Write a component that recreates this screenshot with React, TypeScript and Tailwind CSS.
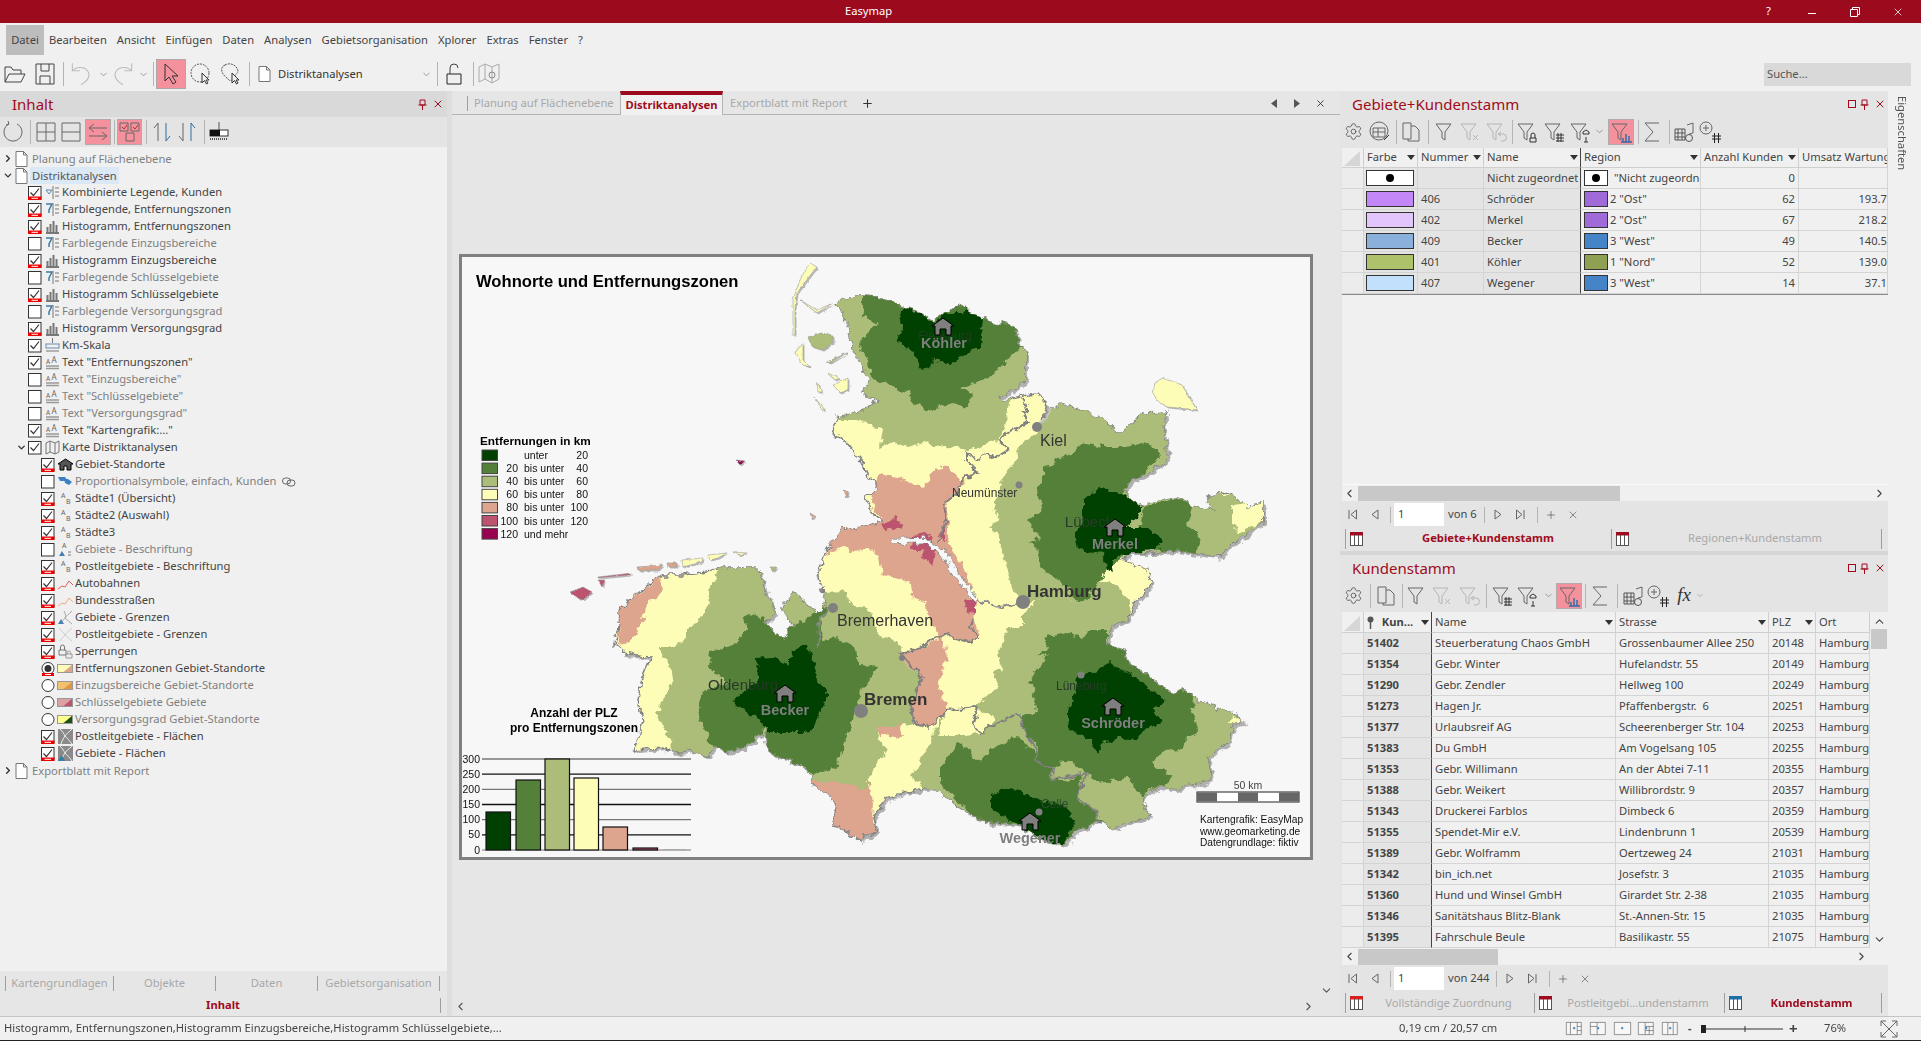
import type { ReactNode } from "react";
import { ChevronDown, ChevronRight, Plus, X, ChevronUp, ChevronLeft, Settings } from "lucide-react";

const ic = { fill: "none", stroke: "#666", strokeWidth: 1 };

// map shapes, in page coordinates of the frame
const LAND =
  "837,302 850,297 862,297 880,298 903,308 922,313 933,320 945,312 965,305 968,312 983,318 995,325 1007,323 1017,332 1018,342 1025,353 1025,377 1017,387 1000,397 1003,402 1023,395 1037,393 1047,403 1043,420 1050,410 1062,404 1080,410 1107,422 1115,432 1125,432 1137,418 1147,413 1167,412 1163,422 1168,457 1143,477 1130,480 1123,490 1140,507 1150,503 1180,497 1192,507 1213,510 1207,498 1227,492 1247,507 1263,503 1263,520 1243,537 1227,547 1220,557 1193,553 1173,550 1157,553 1130,553 1123,560 1147,570 1152,582 1137,600 1127,620 1110,627 1107,645 1123,650 1127,660 1173,695 1182,690 1200,702 1220,710 1233,713 1243,720 1233,725 1230,740 1208,757 1210,780 1170,790 1163,785 1140,797 1150,815 1113,828 1100,820 1077,830 1063,845 1037,837 1020,825 987,822 963,810 933,787 925,788 888,797 873,817 877,830 860,840 833,823 837,803 813,783 813,777 797,763 767,750 765,730 743,748 727,752 715,745 707,757 690,750 672,753 667,748 633,750 637,742 643,723 638,700 643,673 650,657 623,652 615,645 620,623 622,607 630,600 650,583 663,575 683,575 723,568 757,568 775,613 763,623 783,640 793,625 783,608 793,592 817,612 827,605 820,628 817,628 825,600 818,577 827,550 843,530 862,528 880,523 865,498 880,487 867,477 863,463 847,443 832,433 837,417 860,412 880,400 862,393 870,380 863,367 852,347 847,323";

const SALMON = [
  "880,473 897,477 913,485 925,487 933,470 948,467 960,480 973,472 963,485 945,503 950,523 947,543 960,560 977,600 973,617 980,637 963,643 943,633 940,637 928,613 927,603 913,597 910,582 883,575 880,557 868,550 855,552 843,545 827,555 835,530 860,527 880,520 870,500",
  "900,653 917,650 937,640 943,633 947,657 938,683 942,697 947,710 930,727 915,723 910,710 922,677 900,660",
  "813,780 838,770 867,773 873,803 872,820 877,830 860,840 833,823 837,803 813,787",
  "622,607 650,585 660,575 662,592 647,603 643,622 630,643 618,645 620,623",
  "880,727 900,722 903,738 880,735",
];
const LIGHT = [
  "800,290 1030,290 1030,380 1000,400 1010,398 1005,420 1007,427 997,440 970,450 947,447 920,443 908,447 893,442 880,447 883,430 860,420 800,420",
  "1040,430 1045,415 1062,395 1175,395 1175,470 1123,490 1140,505 1180,495 1270,495 1270,545 1200,560 1125,556 1107,570 1080,605 1060,593 1037,600 1023,606 1013,590 1008,570 1000,550 1003,543 990,527 1000,517 993,510 1003,475 1018,458 1017,447",
  "1097,583 1080,605 1060,593 1037,600 1023,613 1023,627 1008,627 997,657 1003,667 992,673 998,687 983,700 973,707 947,710 933,735 917,767 912,778 927,790 1000,850 1260,850 1260,700 1190,680 1127,640 1130,600 1110,580",
  "722,560 780,560 790,590 822,593 847,592 848,603 870,610 880,637 897,640 903,650 900,660 922,677 910,710 915,723 893,727 880,727 878,740 887,750 873,767 867,790 843,783 813,780 760,770 672,760 670,740 657,713 672,680 670,665 658,648 672,648 688,638 688,630 705,613 710,593",
];
const MID = [
  "862,290 1030,290 1030,347 1020,347 1010,357 987,380 960,388 973,393 968,407 950,403 930,410 913,403 910,390 900,392 887,383 873,380 867,360 860,345 862,337 878,325 863,315 862,305",
  "1043,468 1073,452 1083,443 1103,447 1127,447 1143,442 1158,450 1160,458 1137,480 1130,480 1123,490 1130,550 1123,557 1107,570 1093,590 1080,605 1067,587 1043,570 1038,550 1030,543 1040,537 1028,520 1043,507 1035,487 1043,483",
  "1143,507 1180,498 1192,507 1188,523 1200,537 1197,555 1150,550 1140,530",
  "1088,630 1107,630 1107,645 1123,650 1127,660 1173,695 1182,690 1193,697 1192,710 1197,730 1187,738 1180,750 1163,752 1152,763 1172,777 1167,783 1140,795 1130,778 1100,783 1087,773 1080,770 1070,760 1053,767 1037,763 1037,747 1023,727 1020,718 1037,710 1030,680 1040,667 1047,653 1037,657 1047,647 1043,638 1067,633 1083,638",
  "940,767 960,743 970,750 980,762 993,747 1017,737 1037,753 1053,767 1050,780 1062,780 1083,773 1077,800 1097,813 1107,827 1077,830 1063,845 1020,825 980,822 953,797 940,783",
  "743,618 750,613 762,618 775,630 783,640 793,625 805,620 817,608 827,607 820,627 822,640 840,638 855,648 860,665 878,667 873,677 860,690 858,703 847,737 838,757 837,767 813,775 797,763 767,750 765,728 743,750 727,752 713,747 698,717 702,692 730,683 708,667 710,652 733,645 747,630",
];
const DARK = [
  "903,308 900,320 902,328 898,340 913,353 922,370 930,367 933,358 950,365 960,357 980,347 983,318 967,305 962,313 943,313 935,322 920,313",
  "1083,500 1097,488 1110,490 1123,495 1142,505 1138,517 1127,527 1147,527 1163,540 1157,550 1123,555 1110,560 1113,573 1107,570 1103,553 1077,550 1075,537 1083,520",
  "1110,662 1117,667 1128,673 1165,700 1152,710 1162,722 1143,730 1137,740 1120,738 1103,743 1097,755 1090,740 1068,728 1068,710 1075,693 1078,677 1100,668",
  "990,793 1013,788 1030,797 1063,805 1075,820 1067,837 1063,845 1037,837 1020,825 997,813 990,807",
  "732,700 758,682 757,658 775,657 787,665 793,650 807,645 813,660 817,678 828,693 818,720 807,732 767,732 757,717 737,707",
];
const ISLANDS: [string, string][] = [
  ["#fefdb8", "810,263 817,267 812,273 797,293 795,308 795,335 793,335 793,300 800,280 808,265"],
  ["#fefdb8", "800,300 817,310 833,303 817,313"],
  ["#abbd78", "808,338 820,333 833,335 833,343 823,350 813,347"],
  ["#fefdb8", "795,353 803,343 803,360 810,367 803,365"],
  ["#abbd78", "827,362 847,353 830,363"],
  ["#fefdb8", "833,385 848,378 848,390 840,393"],
  ["#fefdb8", "815,398 825,410 822,410"],
  ["#fefdb8", "817,382 822,392 818,392"],
  ["#fefdb8", "827,373 840,378 835,380"],
  ["#dda48e", "843,490 848,492 847,497"],
  ["#dda48e", "810,513 815,516 812,519"],
  ["#bc5470", "570,592 583,587 592,592 583,600 577,598"],
  ["#bc5470", "598,577 632,573 630,575 598,578"],
  ["#bc5470", "598,580 605,580 602,587"],
  ["#dda48e", "637,567 663,565 658,570 638,570"],
  ["#dda48e", "667,563 677,563 677,567 668,567"],
  ["#fefdb8", "682,560 703,558 702,562 683,567"],
  ["#fefdb8", "708,555 727,553 718,558 710,560"],
  ["#fefdb8", "733,552 747,553 740,555"],
  ["#abbd78", "770,567 777,567 773,572"],
  ["#990050", "736,460 745,461 740,465"],
  ["#fefdb8", "1162,378 1182,385 1197,410 1177,408 1167,407 1157,400 1153,393 1155,383"],
];
const ROSE = [
  "880,525 897,517 902,527 885,530",
  "910,550 912,535 930,533 935,552 932,565 925,560 922,550",
  "938,535 945,530 945,540",
  "965,600 975,600 975,613 967,615",
];
const BORDERS = [
  "1023,397 1028,413 1023,412 1028,422 1007,433 1000,440 1008,450 995,458 987,453 977,460 967,453 967,462 977,472 963,480 957,493 943,505 947,523 938,543",
  "1017,713 1037,753 1037,763 1053,767 1052,780 1087,773 1077,798 1097,813 1100,823",
  "973,617 970,627 980,638 963,643 943,633 917,650 900,653 922,677 910,710 915,723 930,727 947,710 977,707 973,723 980,734 993,725 1017,713",
];
const LEGEND: [string, string, string, string][] = [
  ["#004000", "", "unter", "20"],
  ["#548039", "20", "bis unter", "40"],
  ["#abbd78", "40", "bis unter", "60"],
  ["#fefdb8", "60", "bis unter", "80"],
  ["#dda48e", "80", "bis unter", "100"],
  ["#bc5470", "100", "bis unter", "120"],
  ["#990050", "120", "und mehr", ""],
];
const BARS: [number, number, string][] = [
  [486, 812, "#004000"],
  [516, 780, "#548039"],
  [545, 759, "#abbd78"],
  [574, 778, "#fefdb8"],
  [603, 827, "#dda48e"],
  [633, 848, "#bc5470"],
];

function House({ x, y }: { x: number; y: number }) {
  return (
    <path
      d={`M${x - 11} ${y - 1}L${x} ${y - 9}L${x + 11} ${y - 1}H${x + 8}V${y + 8}H${x + 3}V${y + 2}H${x - 3}V${y + 8}H${x - 8}V${y - 1}Z`}
      fill="#7f7f7f"
      stroke="#000"
      strokeWidth="1"
    />
  );
}

function MapDrawing() {
  return (
    <svg width="848" height="600" viewBox="462 257 848 600" className="block font-['Liberation_Sans',sans-serif]">
      <defs>
        <clipPath id="land">
          <polygon points={LAND} />
        </clipPath>
        <filter id="rough" filterUnits="userSpaceOnUse" x="462" y="257" width="848" height="600" colorInterpolationFilters="sRGB">
          <feTurbulence type="fractalNoise" baseFrequency="0.13" numOctaves="3" seed="4" />
          <feDisplacementMap in="SourceGraphic" scale="9" xChannelSelector="R" yChannelSelector="G" />
        </filter>
        <filter id="fine" filterUnits="userSpaceOnUse" x="462" y="257" width="848" height="600" colorInterpolationFilters="sRGB">
          <feTurbulence type="fractalNoise" baseFrequency="0.2" numOctaves="2" seed="9" />
          <feDisplacementMap in="SourceGraphic" scale="3" xChannelSelector="R" yChannelSelector="G" />
        </filter>
      </defs>
      <g filter="url(#rough)">
        <polygon points={LAND} fill="#b0b0b0" transform="translate(3 3)" />
        <polygon points={LAND} fill="#fefdb8" stroke="#808080" strokeWidth="1.5" />
        <g clipPath="url(#land)">
          {SALMON.map((p) => (
            <polygon key={p} points={p} fill="#dda48e" />
          ))}
          {LIGHT.map((p) => (
            <polygon key={p} points={p} fill="#abbd78" />
          ))}
          <polygon points="947,710 977,707 993,717 993,725 980,734 963,735 937,735" fill="#fefdb8" />
          <polygon points="1123,560 1147,570 1152,582 1137,600 1125,590 1110,578" fill="#fefdb8" />
          <polygon points="1232,505 1263,503 1263,520 1240,533 1232,525" fill="#fefdb8" />
          <polygon points="1232,715 1245,720 1235,726 1228,722" fill="#fefdb8" />
          {MID.map((p) => (
            <polygon key={p} points={p} fill="#548039" />
          ))}
          <polygon points="1053,772 1062,760 1070,770 1085,773 1062,782" fill="#abbd78" />
          <polygon points="1080,787 1100,783 1130,778 1140,795 1150,815 1113,828 1107,827 1097,813 1077,800" fill="#abbd78" />
          {DARK.map((p) => (
            <polygon key={p} points={p} fill="#004000" />
          ))}
          {ROSE.map((p) => (
            <polygon key={p} points={p} fill="#bc5470" />
          ))}
        </g>
        {BORDERS.map((p) => (
          <polyline key={p} points={p} fill="none" stroke="#7f7f7f" strokeWidth="2" />
        ))}
        <polyline points="893,541 925,540 945,555 960,580 977,600" fill="none" stroke="#8a8a8a" strokeWidth="6" />
        <polyline points="893,541 925,540 945,555 960,580 977,600" fill="none" stroke="#f7f7f7" strokeWidth="4.5" />
        <polyline points="977,600 1000,607 1020,603" fill="none" stroke="#8a8a8a" strokeWidth="2" />
        <polyline points="827,607 818,627 820,650" fill="none" stroke="#8a8a8a" strokeWidth="1.5" />
        <polyline points="1037,430 1045,420 1050,410" fill="none" stroke="#c8c8c8" strokeWidth="2.5" />
      </g>
      <g filter="url(#fine)">
        {ISLANDS.map(([, p]) => (
          <polygon key={p} points={p} fill="#b8b8b8" transform="translate(1.5 1.5)" />
        ))}
        {ISLANDS.map(([c, p]) => (
          <polygon key={p} points={p} fill={c} stroke="#9a9a9a" strokeWidth="0.6" />
        ))}
      </g>

      {(
        [
          [1037, 427, 5],
          [1019, 485, 3.5],
          [1023, 602, 7],
          [861, 711, 7],
          [833, 608, 5],
          [1081, 675, 3.5],
          [1039, 812, 3.5],
          [902, 658, 3],
        ] as [number, number, number][]
      ).map(([x, y, r]) => (
        <circle key={x} cx={x} cy={y} r={r} fill="#808080" />
      ))}

      <g fill="#333">
        <text x="945" y="340" fontSize="12" textAnchor="middle" fill="#1f3f1f">Flensburg</text>
        <text x="1089" y="527" fontSize="15" textAnchor="middle" fill="#2a3a2a">Lübeck</text>
        <text x="743" y="690" fontSize="15" textAnchor="middle" fill="#283828">Oldenburg</text>
        <text x="1040" y="446" fontSize="16">Kiel</text>
        <text x="952" y="497" fontSize="12">Neumünster</text>
        <text x="837" y="626" fontSize="16">Bremerhaven</text>
        <text x="1056" y="690" fontSize="12" fill="#2a3a2a">Lüneburg</text>
        <text x="1041" y="808" fontSize="12" fill="#2f4a2f">Celle</text>
        <text x="1027" y="597" fontSize="17" fontWeight="700">Hamburg</text>
        <text x="864" y="705" fontSize="17" fontWeight="700">Bremen</text>
      </g>
      <House x={943} y={327} />
      <House x={1115} y={528} />
      <House x={785} y={694} />
      <House x={1113} y={707} />
      <House x={1030} y={822} />
      <g fill="#7f7f7f" fontSize="14.5" fontWeight="700" textAnchor="middle">
        <text x="944" y="348">Köhler</text>
        <text x="1115" y="549">Merkel</text>
        <text x="785" y="715">Becker</text>
        <text x="1113" y="728">Schröder</text>
        <text x="1030" y="843">Wegener</text>
      </g>

      <text x="476" y="287" fontSize="16.6" fontWeight="700" fill="#000">Wohnorte und Entfernungszonen</text>
      <text x="480" y="445" fontSize="11.8" fontWeight="700" fill="#000">Entfernungen in km</text>
      {LEGEND.map(([c, a, b, d], i) => {
        const y = 450 + i * 13.1;
        return (
          <g key={c} fontSize="10.5" fill="#111">
            <rect x="482" y={y} width="15.5" height="10.5" fill={c} stroke="#444" strokeWidth="1" />
            <text x="518" y={y + 9} textAnchor="end">{a}</text>
            <text x="524" y={y + 9}>{b}</text>
            <text x="588" y={y + 9} textAnchor="end">{d}</text>
          </g>
        );
      })}

      <g fontSize="12" fontWeight="700" textAnchor="middle" fill="#000">
        <text x="574" y="717">Anzahl der PLZ</text>
        <text x="574" y="732">pro Entfernungszonen</text>
      </g>
      {[300, 250, 200, 150, 100, 50, 0].map((v, i) => {
        const y = 759 + i * 15.17;
        return (
          <g key={v}>
            <line x1="482" x2="691" y1={y} y2={y} stroke={i % 2 ? "#111" : "#777"} strokeWidth={i === 6 ? 1 : 1.3} />
            <text x="480" y={y + 3.5} fontSize="10.5" textAnchor="end" fill="#111">{v}</text>
          </g>
        );
      })}
      {BARS.map(([x, y, c]) => (
        <rect key={x} x={x} y={y} width="24.5" height={850 - y} fill={c} stroke="#111" strokeWidth="1.2" />
      ))}
      <line x1="663" x2="686" y1="849.5" y2="849.5" stroke="#aaa" />

      <text x="1248" y="789" fontSize="10.5" textAnchor="middle" fill="#444">50 km</text>
      <rect x="1197" y="792" width="102" height="10" fill="#fff" stroke="#222" />
      {[1197, 1238, 1279].map((x) => (
        <rect key={x} x={x} y="792.5" width="20" height="9" fill="#666" />
      ))}
      <g fontSize="10.2" fill="#111">
        <text x="1200" y="823">Kartengrafik: EasyMap</text>
        <text x="1200" y="835">www.geomarketing.de</text>
        <text x="1200" y="846">Datengrundlage: fiktiv</text>
      </g>
    </svg>
  );
}

function Ico({ children, s = 24 }: { children: ReactNode; s?: number }) {
  return (
    <svg width={s} height={s} viewBox="0 0 24 24" className="shrink-0" {...ic}>
      {children}
    </svg>
  );
}

function Funnel({ grey, children }: { grey?: boolean; children?: ReactNode }) {
  return (
    <Ico>
      <path d="M3 4h15l-6 8v8l-3-2v-6z" stroke={grey ? "#b5b5b5" : "#666"} />
      {children}
    </Ico>
  );
}

const FGrid = () => (
  <path d="M14 15h8M14 18h8M14 21h8M16 13v9M19 13v9" stroke="#333" />
);
const FList = () => (
  <>
    <path d="M15 12l3-2 3 2v2h-6z" stroke="#333" />
    <path d="M18 17v5M16 22h4" stroke="#333" />
  </>
);
const FLock = () => <path d="M15 18h6v4h-6zM16 18v-3a2 2 0 0 1 4 0v3" stroke="#333" />;
const FBars = () => (
  <path d="M12 22h11M14 22v-4M17 22v-8M20 22v-6" stroke="#2a6ea8" strokeWidth="1.4" />
);

const Gear = () => <Settings size={19} color="#555" strokeWidth={1.1} />;
const CopyIcon = () => (
  <Ico>
    <path d="M4 3h8v16H4zM12 6h4l4 4v11h-11v-2" />
  </Ico>
);
const Sigma = () => (
  <Ico>
    <path d="M19 3H5l8 9-8 9h14" />
  </Ico>
);
const CalcIcon = () => (
  <Ico>
    <path d="M3 9h10v11H3zM6 9v11M10 9v11M3 13h10M3 17h10" stroke="#555" />
    <path d="M15 5l6-2v10l-4 1" />
    <circle cx="17" cy="18" r="3.500" stroke="#555" />
  </Ico>
);
const AddGrid = () => (
  <Ico>
    <circle cx="8" cy="8" r="6" />
    <path d="M8 5v6M5 8h6" />
    <path d="M14 16h9M14 19h9M16.500 13v10M20.500 13v10" stroke="#222" />
  </Ico>
);
const Hi = ({ children, w }: { children: ReactNode; w: string }) => (
  <div className={`${w} flex h-[26px] items-center justify-center border border-[#b4a8aa] bg-[#f4919d]`}>{children}</div>
);
const Cell = ({ w, children }: { w: string; children?: ReactNode }) => (
  <div className={`${w} flex shrink-0 items-center justify-center`}>{children}</div>
);
const Sep = ({ w, h = "h-[24px]" }: { w: string; h?: string }) => (
  <div className={`${w} flex shrink-0 justify-center`}>
    <div className={`${h} w-px bg-[#b4b4b4]`} />
  </div>
);
const Chev = () => <ChevronDown size={11} color="#777" strokeWidth={1.5} />;

function PanelHead({ title, square, className }: { title: string; square?: boolean; className: string }) {
  return (
    <div className={`flex h-[26px] shrink-0 items-center ${className}`}>
      <span className="flex-1 text-[15px] text-[#a00b20]">{title}</span>
      {square && <div className="mr-[4px] h-[8px] w-[8px] border border-[#a00b20]" />}
      <svg width="9" height="11" viewBox="0 0 9 11" fill="none" stroke="#a00b20" className="mr-[5px]">
        <path d="M2 1h5v5H2zM.5 6h8M4.500 6v5" />
      </svg>
      <X size={12} color="#a00b20" strokeWidth={2} />
    </div>
  );
}

function TabIcon({ color }: { color: string }) {
  return (
    <svg width="13" height="14" viewBox="0 0 13 14">
      <rect x="0.500" y="0.500" width="12" height="13" fill="#fff" stroke="#555" />
      <rect x="0" y="0" width="13" height="3.500" fill={color} />
      <path d="M4.500 3v11M8.500 3v11" stroke="#555" />
    </svg>
  );
}

function BottomTab({ w, icon, label, active, center }: { w: string; icon: string; label: string; active?: boolean; center: string }) {
  return (
    <div className={`${w} flex h-[20px] shrink-0 items-center border-l border-[#9e9e9e] pl-[4px]`}>
      <TabIcon color={icon} />
      <span className={`${center} text-center ${active ? "font-bold text-[#a00b20]" : "text-[#a8a8a8]"}`}>{label}</span>
    </div>
  );
}

function Pager({ label, w }: { label: string; w: string }) {
  return (
    <div className="flex h-[23px] shrink-0 items-center bg-[#e4e4e4] text-[#444]">
      <Cell w="w-[24px]">
        <svg width="11" height="11" viewBox="0 0 11 11" {...ic}><path d="M2 1v9M9.500 1L4 5.500l5.500 4.500z" /></svg>
      </Cell>
      <Cell w="w-[22px]">
        <svg width="8" height="11" viewBox="0 0 8 11" {...ic}><path d="M7 1L1 5.500 7 10z" /></svg>
      </Cell>
      <Sep w="w-[8px]" h="h-[16px]" />
      <div className="flex h-[23px] w-[50px] shrink-0 items-center bg-white pl-[4px]">1</div>
      <span className={`${w} shrink-0 pl-[4px]`}>{label}</span>
      <Sep w="w-[1px]" h="h-[16px]" />
      <Cell w="w-[25px]">
        <svg width="8" height="11" viewBox="0 0 8 11" {...ic}><path d="M1 1l6 4.500L1 10z" /></svg>
      </Cell>
      <Cell w="w-[21px]">
        <svg width="11" height="11" viewBox="0 0 11 11" {...ic}><path d="M9 1v9M1.500 1L7 5.500 1.500 10z" /></svg>
      </Cell>
      <Sep w="w-[13px]" h="h-[16px]" />
      <Cell w="w-[14px]"><Plus size={12} color="#444" strokeWidth={1.2} /></Cell>
      <Cell w="w-[30px]"><X size={12} color="#444" strokeWidth={1.2} /></Cell>
    </div>
  );
}

function Caret() {
  return (
    <svg width="8" height="5" viewBox="0 0 8 5" className="shrink-0">
      <path d="M0 0h8L4 5z" fill="#333" />
    </svg>
  );
}

const HEAD = "flex h-full items-center justify-between border-r border-b border-[#cfcfcf] bg-[#f0f0f0] pl-[3px] pr-[2px]";
const BODY = "flex h-full items-center border-r border-b border-[#d4d4d4] px-[3px]";

function HandleHead() {
  return (
    <div className="flex h-full w-[22px] items-end border-r border-b border-[#cfcfcf] bg-[#f0f0f0]">
      <svg width="20" height="18" viewBox="0 0 20 18"><path d="M18 2v15H2z" fill="#d6d6d6" /></svg>
    </div>
  );
}

const GEBIETE: [string, string, string, string, string, string, string, string][] = [
  ["#fff", "", "Nicht zugeordnet", "#fff", '"Nicht zugeordne', "0", "", "dot"],
  ["#c387f7", "406", "Schröder", "#a06bd8", '2 "Ost"', "62", "193.7", ""],
  ["#e2c5fb", "402", "Merkel", "#a06bd8", '2 "Ost"', "67", "218.2", ""],
  ["#8ab1dc", "409", "Becker", "#4585c7", '3 "West"', "49", "140.5", ""],
  ["#adc26a", "401", "Köhler", "#8ea052", '1 "Nord"', "52", "139.0", ""],
  ["#c2dffb", "407", "Wegener", "#4585c7", '3 "West"', "14", "37.1", ""],
];

function GebieteGrid() {
  return (
    <div className="ml-[2px] flex h-[353px] w-[546px] shrink-0 flex-col overflow-hidden bg-[#f0f0f0]">
      <div className="flex h-[20px] shrink-0">
        <HandleHead />
        <div className={`${HEAD} w-[54px]`}>Farbe<Caret /></div>
        <div className={`${HEAD} w-[66px]`}>Nummer<Caret /></div>
        <div className={`${HEAD} w-[97px] border-r-[#444]`}>Name<Caret /></div>
        <div className={`${HEAD} w-[120px]`}>Region<Caret /></div>
        <div className={`${HEAD} w-[98px]`}>Anzahl Kunden<Caret /></div>
        <div className={`${HEAD} w-[89px] overflow-hidden whitespace-nowrap`}>Umsatz Wartung</div>
      </div>
      {GEBIETE.map(([c, num, name, rc, reg, cnt, sum, dot]) => (
        <div key={name} className="flex h-[21px] shrink-0">
          <div className="h-full w-[22px] border-r border-b border-[#d4d4d4] bg-[#ececec]" />
          <div className={`${BODY} w-[54px] bg-[#e4e4e4] pl-[2px]`}>
            <div className="flex h-[16px] w-[48px] items-center justify-center border border-[#333]" style={{ background: c }}>
              {dot && <div className="h-[8px] w-[8px] rounded-full bg-black" />}
            </div>
          </div>
          <div className={`${BODY} w-[66px] bg-[#e4e4e4]`}>{num}</div>
          <div className={`${BODY} w-[97px] whitespace-nowrap border-r-[#444] bg-[#e4e4e4]`}>{name}</div>
          <div className={`${BODY} w-[120px] overflow-hidden whitespace-nowrap`}>
            <div className="mr-[2px] flex h-[16px] w-[24px] shrink-0 items-center justify-center border border-[#333]" style={{ background: rc }}>
              {dot && <div className="h-[8px] w-[8px] rounded-full bg-black" />}
            </div>
            <span className={dot ? "ml-[4px]" : ""}>{reg}</span>
          </div>
          <div className={`${BODY} w-[98px] justify-end`}>{cnt}</div>
          <div className={`${BODY} w-[89px] justify-end !px-0`}>{sum}</div>
        </div>
      ))}
      <div className="h-px w-full shrink-0 bg-[#8a8a8a]" />
      <div className="flex-1" />
      <div className="h-px w-full shrink-0 bg-[#fafafa]" />
      <div className="flex h-[16px] shrink-0 items-center justify-between">
        <ChevronLeft size={13} color="#444" strokeWidth={2} className="ml-[1px]" />
        <div className="mr-auto ml-[2px] h-[15px] w-[262px] bg-[#c8c8c8]" />
        <ChevronRight size={13} color="#444" strokeWidth={2} className="mr-[2px]" />
      </div>
    </div>
  );
}

const KUNDEN: [string, string, string, string][] = [
  ["51402", "Steuerberatung Chaos GmbH", "Grossenbaumer Allee 250", "20148"],
  ["51354", "Gebr. Winter", "Hufelandstr. 55", "20149"],
  ["51290", "Gebr. Zendler", "Hellweg 100", "20249"],
  ["51273", "Hagen Jr.", "Pfaffenbergstr.  6", "20251"],
  ["51377", "Urlaubsreif AG", "Scheerenberger Str. 104", "20253"],
  ["51383", "Du GmbH", "Am Vogelsang 105", "20255"],
  ["51353", "Gebr. Willimann", "An der Abtei 7-11", "20355"],
  ["51388", "Gebr. Weikert", "Willibrordstr. 9", "20357"],
  ["51343", "Druckerei Farblos", "Dimbeck 6", "20359"],
  ["51355", "Spendet-Mir e.V.", "Lindenbrunn 1", "20539"],
  ["51389", "Gebr. Wolframm", "Oertzeweg 24", "21031"],
  ["51342", "bin_ich.net", "Josefstr. 3", "21035"],
  ["51360", "Hund und Winsel GmbH", "Girardet Str. 2-38", "21035"],
  ["51346", "Sanitätshaus Blitz-Blank", "St.-Annen-Str. 15", "21035"],
  ["51395", "Fahrschule Beule", "Basilikastr. 55", "21075"],
];

function KundenGrid() {
  return (
    <div className="ml-[2px] flex h-[353px] w-[546px] shrink-0 flex-col overflow-hidden bg-[#f0f0f0]">
      <div className="flex h-[336px] shrink-0">
        <div className="w-[528px] shrink-0">
          <div className="flex h-[21px]">
            <HandleHead />
            <div className={`${HEAD} w-[68px] border-r-[#444]`}>
              <svg width="7" height="13" viewBox="0 0 7 13"><circle cx="3.500" cy="3.500" r="3" fill="#555" /><path d="M3.500 5v8" stroke="#555" strokeWidth="1.500" /></svg>
              <span className="font-bold">Kun...</span>
              <Caret />
            </div>
            <div className={`${HEAD} w-[184px]`}>Name<Caret /></div>
            <div className={`${HEAD} w-[153px]`}>Strasse<Caret /></div>
            <div className={`${HEAD} w-[47px]`}>PLZ<Caret /></div>
            <div className={`${HEAD} w-[54px]`}>Ort</div>
          </div>
          {KUNDEN.map(([id, name, str, plz]) => (
            <div key={id} className="flex h-[21px]">
              <div className="h-full w-[22px] border-r border-b border-[#d4d4d4] bg-[#ececec]" />
              <div className={`${BODY} w-[68px] border-r-[#444] bg-[#e4e4e4] font-bold`}>{id}</div>
              <div className={`${BODY} w-[184px] whitespace-nowrap`}>{name}</div>
              <div className={`${BODY} w-[153px] whitespace-pre`}>{str}</div>
              <div className={`${BODY} w-[47px]`}>{plz}</div>
              <div className={`${BODY} w-[54px]`}>Hamburg</div>
            </div>
          ))}
        </div>
        <div className="flex w-[18px] shrink-0 flex-col items-center">
          <ChevronUp size={13} color="#444" strokeWidth={2} className="mt-[3px] mb-[1px]" />
          <div className="h-[20px] w-[16px] bg-[#c8c8c8]" />
          <div className="flex-1" />
          <ChevronDown size={13} color="#444" strokeWidth={2} className="mb-[2px]" />
        </div>
      </div>
      <div className="flex h-[17px] w-[528px] shrink-0 items-center">
        <ChevronLeft size={13} color="#444" strokeWidth={2} className="ml-[1px]" />
        <div className="ml-[2px] h-[16px] w-[140px] bg-[#c8c8c8]" />
        <div className="flex-1" />
        <ChevronRight size={13} color="#444" strokeWidth={2} className="mr-[2px]" />
      </div>
    </div>
  );
}

type Kind = "on" | "red" | "off" | "radio" | "radioOn";

function Check({ kind }: { kind: Kind }) {
  if (kind === "radio" || kind === "radioOn") {
    return (
      <svg width="14" height="14" viewBox="0 0 14 14" className="shrink-0">
        <circle cx="7" cy="6.500" r="6" fill="#fff" stroke="#333" />
        {kind === "radioOn" && <circle cx="7" cy="6.500" r="3.500" fill="#333" />}
        {kind === "radioOn" && <path d="M1 11h12v3H1z" fill="#e00" />}
        {kind === "radioOn" && <path d="M4 12.500h6" stroke="#fff" />}
      </svg>
    );
  }
  return (
    <svg width="14" height="14" viewBox="0 0 14 14" className="shrink-0">
      <rect x="0.500" y="0.500" width="12.500" height="12.500" fill="#fff" stroke="#333" />
      {kind !== "off" && <path d="M2.500 6.500l3 3 5.500-7" fill="none" stroke="#333" strokeWidth="1.200" />}
      {kind === "red" && <path d="M0 10.500h13.500V14H0z" fill="#e00" />}
      {kind === "red" && <path d="M3.500 12.300h6.500" stroke="#fff" />}
    </svg>
  );
}

function TreeIcon({ k }: { k: string }) {
  const box = (c: ReactNode) => (
    <svg width="15" height="15" viewBox="0 0 15 15" fill="none" stroke="#777" strokeWidth="1" className="shrink-0">
      {c}
    </svg>
  );
  const txt = (a: string, b: string, y = 7) => (
    <>
      <text x="3" y={y} fontSize="7" fill="#666" stroke="none">{a}</text>
      <text x="8" y={y + 6} fontSize="7" fill="#666" stroke="none">{b}</text>
    </>
  );
  switch (k) {
    case "leg":
      return box(<><path d="M1 5h6L4 9z" stroke="#5a8ab0" /><path d="M8 1v13" /><path d="M10 3h4M10 7h4M10 11h4" /></>);
    case "farb":
      return box(<><path d="M1 2h6L4 8v3" stroke="#3a7ca8" strokeWidth="1.500" /><path d="M8 1v13" /><path d="M10 3h4M10 7h4M10 11h4" /></>);
    case "hist":
      return box(<path d="M1 14h13M2.500 14V8M5.500 14V5M8.500 14V2M11.500 14V6" strokeWidth="2" stroke="#777" />);
    case "km":
      return box(<><path d="M7.500 0v5" /><rect x="1" y="6" width="13" height="4" stroke="#6a8ab0" /><path d="M1 13h13" /></>);
    case "txt":
      return box(<><text x="1" y="9" fontSize="6.500" fill="#666" stroke="none">A</text><text x="6.500" y="8" fontSize="8" fill="#666" stroke="none">A</text><path d="M1 11h13M1 13.500h13" stroke="#999" strokeWidth="1.300" /></>);
    case "map":
      return box(<path d="M1 3l4-2 5 2 4-2v11l-4 2-5-2-4 2zM5 1v11M10 3v11" />);
    case "house":
      return box(<path d="M0 7l7.500-5L15 7h-2v6H9V9H6v4H2V7z" fill="#555" stroke="#000" />);
    case "prop":
      return box(<><path d="M0 3h7l2 3-3 1H2z" fill="#3d7fc4" stroke="none" /><path d="M6 5h4l4 3-3 3-4-2z" fill="#3d7fc4" stroke="none" /></>);
    case "ab":
      return box(txt("A", "B"));
    case "gebl":
      return box(<><text x="4" y="6" fontSize="7" fill="#666" stroke="none">A</text><path d="M1 14l3-5 3 5z" fill="#4a80b0" stroke="none" /><path d="M10 10h3M10 13h3" /></>);
    case "auto":
      return box(<path d="M0 13l4-3 3 1 4-6 4 4" stroke="#e06060" />);
    case "bund":
      return box(<path d="M0 13l4-3 3 1 4-6 4 4" stroke="#f0a878" />);
    case "grenz":
      return box(<><path d="M6 1c2 4 2 6 1 7s-3 3-4 6M14 1c-3 3-6 5-7 7 2 2 5 4 7 6" stroke="#aaa" /><path d="M0 14l3-5 3 5z" fill="#4a80b0" stroke="none" /></>);
    case "plzg":
      return box(<path d="M1 1c3 3 5 5 6 7-2 2-4 4-5 6M14 1c-3 3-6 5-7 7 2 2 5 4 7 6" stroke="#ccc" />);
    case "sperr":
      return box(<><path d="M1 6h7v5H1zM2.500 6V3a2 2 0 0 1 4 0v3" /><path d="M8 10h6v4H8zM9.500 10V8.500a1.500 1.500 0 0 1 3 0V10" stroke="#999" /></>);
    case "g1":
      return grad("#fefdb8", "#dda48e");
    case "g2":
      return grad("#f3c070", "#e09840");
    case "g3":
      return grad("#dba0a0", "#bc5470");
    case "g4":
      return grad("#fefd90", "#1a5010");
    case "fl":
    case "fl2":
      return (
        <svg width="15" height="15" viewBox="0 0 15 15" className="shrink-0">
          <rect width="15" height="15" fill="#8a8a8a" />
          <path d="M2 0c3 3 4 5 5 7-2 3-3 5-4 8M14 0c-3 3-6 5-7 7 2 2 5 5 7 8" fill="none" stroke="#eee" />
          {k === "fl2" && <path d="M0 15l3.500-6 3.500 6z" fill="#3a7ca8" />}
        </svg>
      );
  }
  return null;
}

function grad(a: string, b: string) {
  return (
    <svg width="16" height="9" viewBox="0 0 16 9" className="shrink-0">
      <rect width="16" height="9" fill={a} />
      <path d="M16 0v9H5c3-2 7-6 11-9z" fill={b} />
      <rect x="0.500" y="0.500" width="15" height="8" fill="none" stroke="#999" />
    </svg>
  );
}

const TREE1: [string, string, Kind][] = [
  ["Kombinierte Legende, Kunden", "leg", "red"],
  ["Farblegende, Entfernungszonen", "farb", "red"],
  ["Histogramm, Entfernungszonen", "hist", "red"],
  ["Farblegende Einzugsbereiche", "farb", "off"],
  ["Histogramm Einzugsbereiche", "hist", "red"],
  ["Farblegende Schlüsselgebiete", "farb", "off"],
  ["Histogramm Schlüsselgebiete", "hist", "red"],
  ["Farblegende Versorgungsgrad", "farb", "off"],
  ["Histogramm Versorgungsgrad", "hist", "red"],
  ["Km-Skala", "km", "on"],
  ['Text "Entfernungszonen"', "txt", "on"],
  ['Text "Einzugsbereiche"', "txt", "off"],
  ['Text "Schlüsselgebiete"', "txt", "off"],
  ['Text "Versorgungsgrad"', "txt", "off"],
  ['Text "Kartengrafik:..."', "txt", "on"],
];
const TREE2: [string, string, Kind][] = [
  ["Gebiet-Standorte", "house", "red"],
  ["Proportionalsymbole, einfach, Kunden", "prop", "off"],
  ["Städte1 (Übersicht)", "ab", "red"],
  ["Städte2 (Auswahl)", "ab", "red"],
  ["Städte3", "ab", "red"],
  ["Gebiete - Beschriftung", "gebl", "off"],
  ["Postleitgebiete - Beschriftung", "ab", "red"],
  ["Autobahnen", "auto", "red"],
  ["Bundesstraßen", "bund", "red"],
  ["Gebiete - Grenzen", "grenz", "red"],
  ["Postleitgebiete - Grenzen", "plzg", "red"],
  ["Sperrungen", "sperr", "red"],
  ["Entfernungszonen Gebiet-Standorte", "g1", "radioOn"],
  ["Einzugsbereiche Gebiet-Standorte", "g2", "radio"],
  ["Schlüsselgebiete Gebiete", "g3", "radio"],
  ["Versorgungsgrad Gebiet-Standorte", "g4", "radio"],
  ["Postleitgebiete - Flächen", "fl", "red"],
  ["Gebiete - Flächen", "fl2", "red"],
];

const PageIcon = () => (
  <svg width="13" height="16" viewBox="0 0 13 16" fill="#fff" stroke="#777" className="shrink-0">
    <path d="M1 .5h7.500L12 4v11.500H1zM8.500.5V4H12" />
  </svg>
);

function TopNode({ open, label, active }: { open?: boolean; label: string; active?: boolean }) {
  return (
    <div className="flex h-[17px] items-center">
      {open ? <ChevronDown size={11} color="#333" strokeWidth={3} className="w-[14px] shrink-0" /> : <ChevronRight size={11} color="#333" strokeWidth={3} className="w-[14px] shrink-0" />}
      <PageIcon />
      <span className={`ml-[2px] px-[2px] leading-[17px] ${active ? "bg-[#dbe8f5] text-[#555]" : "text-[#808080]"}`}>{label}</span>
    </div>
  );
}

function TreeRow({ label, icon, kind, deep }: { label: string; icon: string; kind: Kind; deep?: boolean }) {
  const dim = kind === "off" || kind === "radio";
  return (
    <div className={`flex h-[17px] items-center whitespace-nowrap ${deep ? "pl-[40px]" : "pl-[27px]"}`}>
      <Check kind={kind} />
      <span className="ml-[2px] flex w-[16px] shrink-0 justify-center"><TreeIcon k={icon} /></span>
      <span className={`ml-[2px] ${dim ? "text-[#808080]" : "text-[#444]"}`}>{label}</span>
      {label.startsWith("Proportional") && (
        <svg width="14" height="10" viewBox="0 0 14 10" fill="none" stroke="#666" className="ml-[5px]">
          <rect x="0.500" y="1" width="8" height="6" rx="3" />
          <rect x="5" y="3" width="8" height="6" rx="3" />
        </svg>
      )}
    </div>
  );
}

function LeftPanel() {
  return (
    <div className="flex w-[447px] shrink-0 flex-col">
      <PanelHead title="Inhalt" className="bg-[#d9d9d9] pr-[3px] pl-[12px]" />
      <div className="flex h-[30px] shrink-0 items-center bg-[#e4e4e4]">
        <Cell w="w-[26px]">
          <Ico><path d="M8 4a9 9 0 1 0 8 0M7 1l1 3-3 1" /></Ico>
        </Cell>
        <Sep w="w-[8px]" />
        <Cell w="w-[24px]"><Ico><path d="M3 3h18v18H3zM12 3v18M3 12h18" /></Ico></Cell>
        <Cell w="w-[26px]"><Ico><path d="M3 3h18v18H3zM3 12h18" /></Ico></Cell>
        <div className="ml-px"><Hi w="w-[26px]"><Ico><path d="M8 4L3 8l5 4M3 8h18M16 12l5 4-5 4M21 16H3" /></Ico></Hi></div>
        <Sep w="w-[6px]" />
        <Hi w="w-[25px]">
          <Ico>
            <path d="M2 3h8v8H2zM13 3h8v8h-8zM8 13h8v8H8z" />
            <path d="M4 7l2 2 3-4M15 7l2 2 3-4" stroke="#a33" />
          </Ico>
        </Hi>
        <Sep w="w-[8px]" />
        <Cell w="w-[24px]">
          <Ico><path d="M8 21V3L4 8" /><path d="M16 3v18l4-5" stroke="#2a6ea8" /></Ico>
        </Cell>
        <Cell w="w-[26px]">
          <Ico><path d="M8 3v18l-4-5" /><path d="M16 21V3l4 5" stroke="#2a6ea8" /></Ico>
        </Cell>
        <Sep w="w-[8px]" />
        <Cell w="w-[22px]">
          <svg width="20" height="20" viewBox="0 0 20 20"><path d="M10 0v8" stroke="#555" /><rect x="1" y="8" width="18" height="6" fill="#fff" stroke="#333" /><rect x="1" y="8" width="10" height="6" fill="#111" /><path d="M1 17h18" stroke="#555" strokeDasharray="1 1" strokeWidth="2" /></svg>
        </Cell>
      </div>
      <div className="flex-1 bg-[#f0f0f0] pl-px">
        <div className="h-[3px]" />
        <TopNode label="Planung auf Flächenebene" />
        <TopNode open active label="Distriktanalysen" />
        {TREE1.map(([l, i, k]) => (
          <TreeRow key={l} label={l} icon={i} kind={k} />
        ))}
        <div className="flex h-[17px] items-center pl-[14px]">
          <ChevronDown size={11} color="#333" strokeWidth={3} className="w-[13px] shrink-0" />
          <Check kind="on" />
          <span className="ml-[2px] flex w-[16px] shrink-0 justify-center"><TreeIcon k="map" /></span>
          <span className="ml-[2px] text-[#444]">Karte Distriktanalysen</span>
        </div>
        {TREE2.map(([l, i, k]) => (
          <TreeRow key={l} deep label={l} icon={i} kind={k} />
        ))}
        <TopNode label="Exportblatt mit Report" />
      </div>
      <div className="h-[45px] shrink-0 bg-[#e6e6e6] text-[#a8a8a8]">
        <div className="flex h-[24px] items-center pl-[5px]">
          <div className="flex h-[15px] w-[108px] items-center justify-center border-l border-[#9e9e9e]">Kartengrundlagen</div>
          <div className="flex h-[15px] w-[102px] items-center justify-center border-l border-[#9e9e9e]">Objekte</div>
          <div className="flex h-[15px] w-[102px] items-center justify-center border-l border-[#9e9e9e]">Daten</div>
          <div className="flex h-[15px] w-[123px] items-center justify-center border-x border-[#9e9e9e]">Gebietsorganisation</div>
        </div>
        <div className="flex h-[20px] items-center pr-[6px]">
          <span className="flex-1 pl-[6px] text-center font-bold text-[#a00b20]">Inhalt</span>
          <div className="h-[15px] w-px bg-[#9e9e9e]" />
        </div>
      </div>
    </div>
  );
}

function CenterPanel() {
  return (
    <div className="flex w-[888px] shrink-0 flex-col bg-[#e6e6e6]">
      <div className="flex h-[24px] shrink-0 items-end">
        <div className="flex h-[23px] w-[168px] shrink-0 items-center border-b border-[#b4b4b4] pl-[15px] text-[#a8a8a8]">
          <span className="flex h-[15px] items-center border-l border-[#9e9e9e] pl-[6px]">Planung auf Flächenebene</span>
        </div>
        <div className="flex h-[24px] w-[103px] shrink-0 items-center justify-center border-t-4 border-x border-t-[#9c0a1e] border-x-[#b4b4b4] bg-[#f0f0f0] font-bold text-[#a00b20]">
          Distriktanalysen
        </div>
        <div className="flex h-[23px] flex-1 items-center border-b border-[#b4b4b4] pl-[7px] text-[#a8a8a8]">
          <span className="w-[131px]">Exportblatt mit Report</span>
          <Plus size={13} color="#333" strokeWidth={2} />
          <div className="flex-1" />
          <svg width="6" height="9" viewBox="0 0 6 9" className="mr-[17px]"><path d="M6 0v9L0 4.500z" fill="#555" /></svg>
          <svg width="6" height="9" viewBox="0 0 6 9" className="mr-[15px]"><path d="M0 0v9l6-4.500z" fill="#555" /></svg>
          <X size={11} color="#333" strokeWidth={2} className="mr-[14px]" />
        </div>
      </div>
      <div className="flex flex-1">
        <div className="flex-1 pt-[139px] pl-[7px]">
          <div className="w-[854px] border-[3px] border-[#808080] bg-[#f7f7f7]">
            <MapDrawing />
          </div>
        </div>
        <div className="flex w-[21px] shrink-0 items-end pl-[1px]">
          <ChevronDown size={13} color="#555" strokeWidth={2} />
        </div>
      </div>
      <div className="flex h-[19px] shrink-0 items-center justify-between pr-[25px] pl-[2px]">
        <ChevronLeft size={13} color="#555" strokeWidth={2} />
        <ChevronRight size={13} color="#555" strokeWidth={2} />
      </div>
    </div>
  );
}

function RightPanels() {
  return (
    <div className="flex w-[548px] shrink-0 flex-col bg-[#e4e4e4] text-[#444]">
      <PanelHead title="Gebiete+Kundenstamm" square className="pr-[2px] pl-[12px]" />
      <div className="flex h-[31px] shrink-0 items-center pb-[2px]">
        <Cell w="w-[26px]"><Gear /></Cell>
        <Cell w="w-[27px]">
          <Ico><circle cx="11" cy="11" r="9" /><path d="M5 8h12v9H5zM5 12h12M10 8v9" /><path d="M16 20l5-5" stroke="#333" /></Ico>
        </Cell>
        <Sep w="w-[6px]" />
        <Cell w="w-[24px]"><CopyIcon /></Cell>
        <Sep w="w-[10px]" />
        <Cell w="w-[24px]"><Funnel /></Cell>
        <Cell w="w-[26px]"><Funnel grey><path d="M15 15l5 5M20 15l-5 5" stroke="#b5b5b5" /></Funnel></Cell>
        <Cell w="w-[26px]"><Funnel grey><path d="M15 14h4a3 3 0 0 1 0 7h-2M17 12l-3 2 3 2" stroke="#b5b5b5" /></Funnel></Cell>
        <Sep w="w-[6px]" />
        <Cell w="w-[24px]"><Funnel><FLock /></Funnel></Cell>
        <Cell w="w-[30px]"><Funnel><FGrid /></Funnel></Cell>
        <Cell w="w-[22px]"><Funnel><FList /></Funnel></Cell>
        <Cell w="w-[17px]"><Chev /></Cell>
        <Hi w="w-[26px]"><Funnel><FBars /></Funnel></Hi>
        <Sep w="w-[8px]" />
        <Cell w="w-[20px]"><Sigma /></Cell>
        <Sep w="w-[14px]" />
        <Cell w="w-[16px]"><CalcIcon /></Cell>
        <Cell w="w-[36px]"><AddGrid /></Cell>
      </div>
      <GebieteGrid />
      <div className="h-[2px] shrink-0" />
      <Pager label="von 6" w="w-[40px]" />
      <div className="flex h-[25px] shrink-0 items-center pl-[5px]">
        <BottomTab w="w-[266px]" icon="#a00b20" label="Gebiete+Kundenstamm" active center="flex-1 pl-[2px]" />
        <BottomTab w="w-[270px]" icon="#a00b20" label="Regionen+Kundenstamm" center="flex-1" />
        <div className="h-[20px] w-px bg-[#9e9e9e]" />
      </div>
      <div className="h-[4px] shrink-0 bg-[#d6d6d6]" />
      <PanelHead title="Kundenstamm" square className="pr-[2px] pl-[12px]" />
      <div className="flex h-[31px] shrink-0 items-center pb-[2px]">
        <Cell w="w-[26px]"><Gear /></Cell>
        <Sep w="w-[8px]" />
        <Cell w="w-[24px]"><CopyIcon /></Cell>
        <Sep w="w-[8px]" />
        <Cell w="w-[22px]"><Funnel /></Cell>
        <Cell w="w-[28px]"><Funnel grey><path d="M15 15l5 5M20 15l-5 5" stroke="#b5b5b5" /></Funnel></Cell>
        <Cell w="w-[26px]"><Funnel grey><path d="M15 14h4a3 3 0 0 1 0 7h-2M17 12l-3 2 3 2" stroke="#b5b5b5" /></Funnel></Cell>
        <Sep w="w-[8px]" />
        <Cell w="w-[24px]"><Funnel><FGrid /></Funnel></Cell>
        <Cell w="w-[26px]"><Funnel><FList /></Funnel></Cell>
        <Cell w="w-[16px]"><Chev /></Cell>
        <Hi w="w-[26px]"><Funnel><FBars /></Funnel></Hi>
        <Sep w="w-[6px]" />
        <Cell w="w-[24px]"><Sigma /></Cell>
        <Sep w="w-[10px]" />
        <Cell w="w-[22px]"><CalcIcon /></Cell>
        <Cell w="w-[28px]"><AddGrid /></Cell>
        <Cell w="w-[24px]">
          <span className="font-['Liberation_Serif',serif] text-[19px] italic text-[#333]">fx</span>
        </Cell>
        <Cell w="w-[8px]"><Chev /></Cell>
      </div>
      <KundenGrid />
      <div className="h-[2px] shrink-0" />
      <Pager label="von 244" w="w-[52px]" />
      <div className="flex flex-1 items-center pl-[5px]">
        <BottomTab w="w-[189px]" icon="#d92020" label="Vollständige Zuordnung" center="flex-1" />
        <BottomTab w="w-[190px]" icon="#a00b20" label="Postleitgebi...undenstamm" center="flex-1" />
        <BottomTab w="w-[157px]" icon="#1d6fa5" label="Kundenstamm" active center="flex-1" />
        <div className="h-[20px] w-px bg-[#9e9e9e]" />
      </div>
    </div>
  );
}

const VIEWS = [
  "M2 2h22v18H2zM8 2v18M18 2v18M18 8h6M18 14h6",
  "M2 2h22v18H2zM2 8h10M12 2v18",
  "M2 2h24v18H2z",
  "M2 2h22v18H2zM12 2v18M12 8h12M12 14h12M18 8v12",
  "M2 2h22v18H2zM10 2v18M18 2v18",
];

function StatusBar() {
  return (
    <div className="flex h-[25px] shrink-0 items-center border-t border-[#c4c4c4] border-b border-b-[#222] bg-[#f0f0f0] pl-[4px] text-[#444]">
      <span className="w-[1340px] shrink-0 whitespace-nowrap">
        Histogramm, Entfernungszonen,Histogramm Einzugsbereiche,Histogramm Schlüsselgebiete,...
      </span>
      <span className="w-[221px] shrink-0 pl-[55px]">0,19 cm / 20,57 cm</span>
      <div className="flex w-[123px] shrink-0 gap-[5px]">
        {VIEWS.map((d) => (
          <svg key={d} width="19" height="17" viewBox="0 0 28 22" fill="#f7f7f7" stroke="#666" className="shrink-0">
            <path d={d} />
            <rect x="12" y="9" width="3" height="3" fill="#3d86c6" stroke="none" />
          </svg>
        ))}
      </div>
      <span className="w-[13px] shrink-0 font-bold">-</span>
      <svg width="88" height="12" viewBox="0 0 88 12" className="shrink-0">
        <path d="M0 6h82M44 3v6" stroke="#333" />
        <rect x="0" y="2" width="5" height="8" fill="#222" />
      </svg>
      <span className="w-[35px] shrink-0 text-[15px] font-bold">+</span>
      <span className="w-[56px] shrink-0">76%</span>
      <svg width="18" height="18" viewBox="0 0 18 18" fill="none" stroke="#666" className="shrink-0">
        <path d="M1 1l16 16M17 1L1 17M1 6V1h5M12 1h5v5M1 12v5h5M17 12v5h-5" />
      </svg>
    </div>
  );
}

export default function App() {
  const menus = ["Ansicht", "Einfügen", "Daten", "Analysen", "Gebietsorganisation", "Xplorer", "Extras", "Fenster", "?"];
  return (
    <div className="flex h-[1041px] w-[1921px] flex-col overflow-hidden bg-[#f0f0f0] font-['Noto_Sans',sans-serif] text-[11.2px] text-[#444]">
      {/* title bar */}
      <div className="flex h-[23px] shrink-0 items-center bg-[#9c0a1e] text-white">
        <span className="w-[1747px] shrink-0 pl-[845px]">Easymap</span>
        <Cell w="w-[43px]"><span>?</span></Cell>
        <Cell w="w-[43px]"><div className="mt-[4px] h-px w-[8px] bg-white" /></Cell>
        <Cell w="w-[43px]">
          <svg width="10" height="10" viewBox="0 0 10 10" fill="none" stroke="#fff"><path d="M.5 2.500h7v7h-7zM2.500 2.500v-2h7v7h-2" /></svg>
        </Cell>
        <Cell w="w-[43px]"><X size={12} color="#fff" strokeWidth={1.5} /></Cell>
      </div>
      {/* menu */}
      <div className="flex h-[34px] shrink-0 items-center pl-[6px] text-[#444]">
        <div className="flex h-[30px] w-[38px] items-center justify-center bg-[#bdbdbd]">Datei</div>
        <span className="ml-[5px]">Bearbeiten</span>
        {menus.map((m) => (
          <span key={m} className="ml-[10px]">{m}</span>
        ))}
      </div>
      {/* main toolbar */}
      <div className="flex h-[34px] shrink-0 items-center">
        <Cell w="w-[29px]">
          <Ico s={24}><path d="M2 20V5h6l2 3h8v4M2 20l4-8h16l-4 8z" stroke="#444" /></Ico>
        </Cell>
        <Cell w="w-[31px]">
          <Ico s={24}><path d="M3 2h18v20H3zM8 2v7h8V2M7 22v-8h10v8" stroke="#444" /></Ico>
        </Cell>
        <Sep w="w-[6px]" />
        <Cell w="w-[30px]">
          <Ico s={26}><path d="M4 2v7h7" stroke="#bbb" /><path d="M4 9c4-4 11-4 14 0s1 9-6 13" stroke="#bbb" /></Ico>
        </Cell>
        <Cell w="w-[14px]"><Chev /></Cell>
        <Cell w="w-[26px]">
          <Ico s={26}><path d="M20 2v7h-7" stroke="#bbb" /><path d="M20 9c-4-4-11-4-14 0s-1 9 6 13" stroke="#bbb" /></Ico>
        </Cell>
        <Cell w="w-[14px]"><Chev /></Cell>
        <Sep w="w-[6px]" />
        <div className="flex h-[30px] w-[30px] shrink-0 items-center justify-center border border-[#b0a5a7] bg-[#f4919d]">
          <Ico s={24}><path d="M6 2v17l4-4 4 7 3-2-4-6h6z" stroke="#333" /></Ico>
        </div>
        <Cell w="w-[30px]">
          <Ico s={24}><circle cx="11" cy="11" r="9" strokeDasharray="2 1" stroke="#555" /><path d="M13 11v10l2.500-2.500 2 3.500 1.500-1-2-3h3z" stroke="#333" fill="#f0f0f0" /></Ico>
        </Cell>
        <Cell w="w-[30px]">
          <Ico s={24}><path d="M6 3c5-3 12 0 13 6 0 3-3 3-3 5s-4 6-6 4-6-5-7-8 0-6 3-7z" strokeDasharray="2 1" stroke="#555" /><path d="M13 11v10l2.500-2.500 2 3.500 1.500-1-2-3h3z" stroke="#333" fill="#f0f0f0" /></Ico>
        </Cell>
        <Sep w="w-[6px]" />
        <Cell w="w-[24px]"><PageIcon /></Cell>
        <span className="w-[144px] shrink-0 pl-[2px] text-[#333]">Distriktanalysen</span>
        <Cell w="w-[12px]"><Chev /></Cell>
        <Sep w="w-[10px]" />
        <Cell w="w-[24px]">
          <Ico s={24}><path d="M5 12h14v10H5z" stroke="#222" /><path d="M8 12V6a4 4 0 0 1 8 0" stroke="#444" /></Ico>
        </Cell>
        <Sep w="w-[14px]" />
        <Cell w="w-[20px]">
          <Ico s={24}><path d="M1 5l6-3 7 3 7-3v15l-7 4-7-4-6 3zM7 2v15M14 5v16" stroke="#aaa" /><circle cx="14" cy="13" r="3" stroke="#888" /></Ico>
        </Cell>
        <div className="flex-1" />
        <div className="mr-[10px] flex h-[23px] w-[147px] shrink-0 items-center bg-[#d9d9d9] pl-[3px] text-[#555]">Suche...</div>
      </div>
      {/* panels */}
      <div className="flex min-h-0 flex-1">
        <LeftPanel />
        <div className="w-[5px] shrink-0 bg-[#dedede]" />
        <CenterPanel />
        <RightPanels />
        <div className="flex-1 bg-[#f0f0f0] pt-[5px] pl-[5px]">
          <span className="text-[#555] [writing-mode:vertical-rl]">Eigenschaften</span>
        </div>
      </div>
      <StatusBar />
    </div>
  );
}
